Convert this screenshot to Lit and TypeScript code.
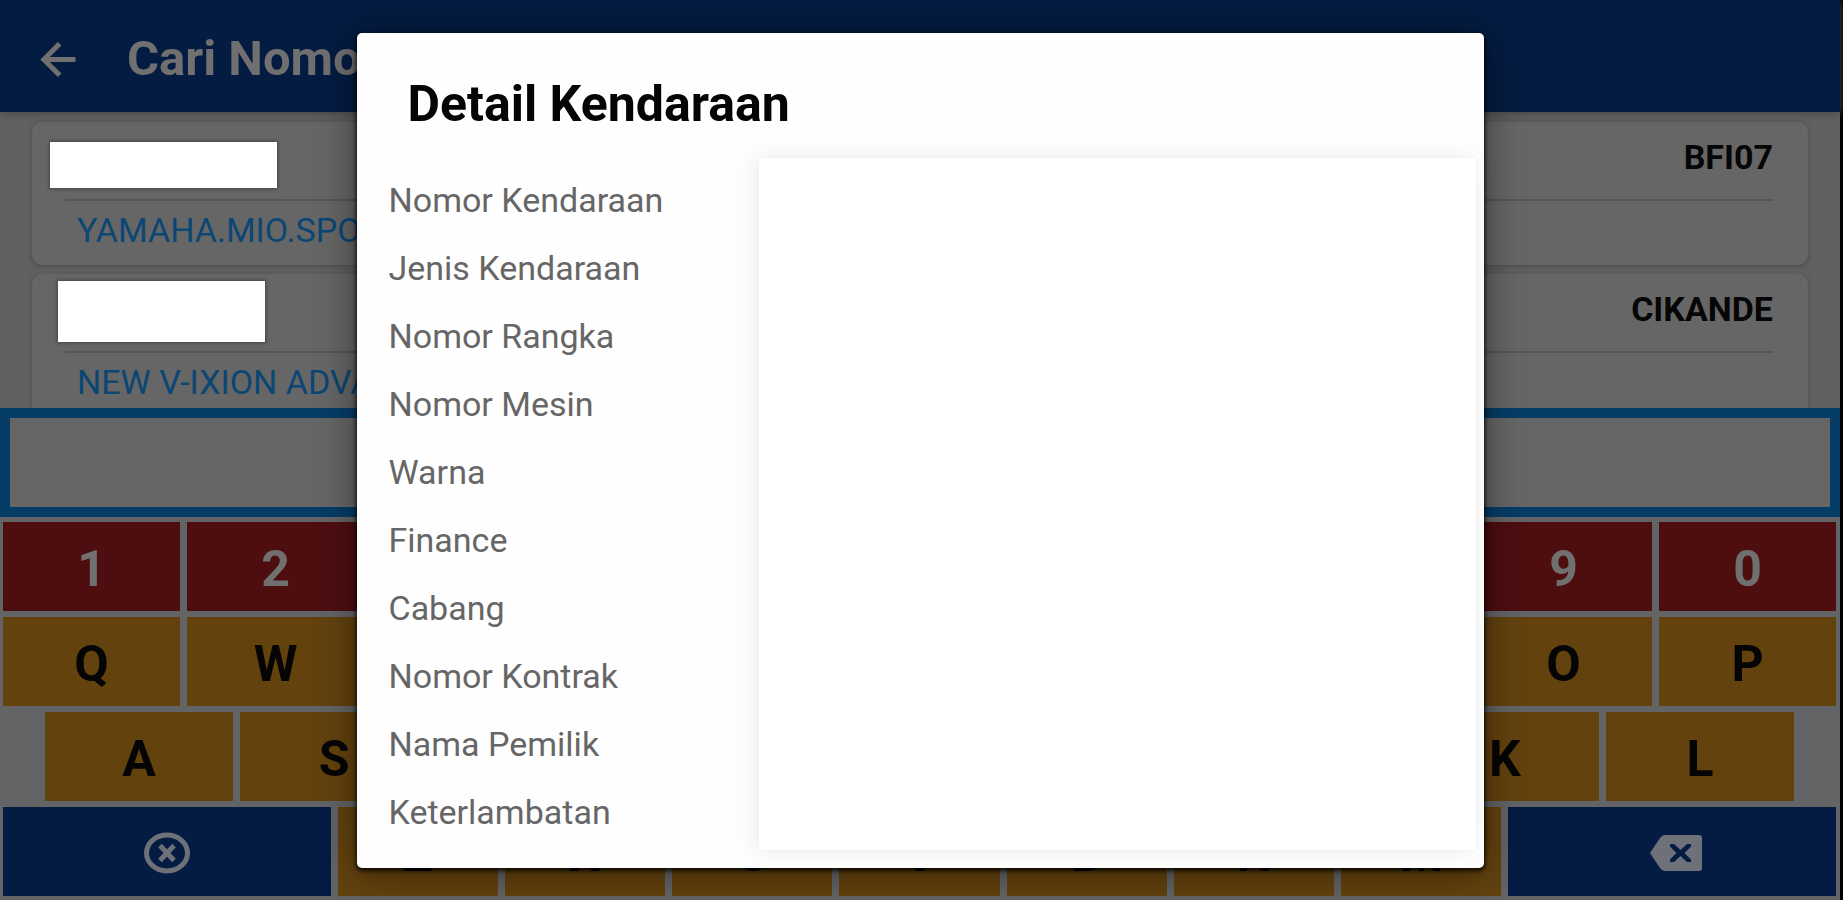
import { LitElement, html, css, svg } from "lit";
import { customElement, property } from "lit/decorators.js";

interface Vehicle {
  model: string;
  branch: string;
  mask: string;
}

const VEHICLES: Vehicle[] = [
  { model: "YAMAHA.MIO.SPORTY", branch: "BFI07", mask: "mask mask-wide" },
  { model: "NEW V-IXION ADVANCE", branch: "CIKANDE", mask: "mask mask-tall" },
];

const FIELDS = [
  "Nomor Kendaraan",
  "Jenis Kendaraan",
  "Nomor Rangka",
  "Nomor Mesin",
  "Warna",
  "Finance",
  "Cabang",
  "Nomor Kontrak",
  "Nama Pemilik",
  "Keterlambatan",
];

const clearIcon = svg`<svg viewBox="0 0 48 42" width="48" height="42" aria-hidden="true">
  <ellipse cx="24" cy="21" rx="20.500" ry="18" fill="none" stroke="currentColor" stroke-width="5"/>
  <path d="M17 13.500L31 28.500M31 13.500L17 28.500" stroke="currentColor" stroke-width="5"/>
</svg>`;

const backspaceIcon = svg`<svg viewBox="0 0 54 38" width="54" height="38" aria-hidden="true">
  <path fill="currentColor" fill-rule="evenodd" d="M16 1Q13 1 11 4L1 19L11 34Q13 37 16 37H50Q53 37 53 34V4Q53 1 50 1ZM25 10L31.500 16L38 10H42V12.500L35.500 19L42 25.500V28H38L31.500 22L25 28H21V25.500L27.500 19L21 12.500V10Z"/>
</svg>`;

@customElement("vehicle-card")
export class VehicleCard extends LitElement {
  @property({ attribute: false }) vehicle!: Vehicle;

  static styles = css`
    :host {
      display: block;
    }
    .card {
      position: relative;
      box-sizing: border-box;
      height: 143px;
      padding: 0 35px 0 33px;
      border-radius: 10px;
      background: #666;
      box-shadow: 0 1px 4px 1px #505050;
    }
    .top {
      display: flex;
      align-items: center;
      justify-content: flex-end;
      height: 70px;
      padding-bottom: 7px;
      border-bottom: 2px solid #565656;
      color: #060606;
      font-weight: 700;
      font-size: 34px;
    }
    .model {
      display: block;
      padding-left: 12px;
      color: #0b4674;
      font-size: 34px;
      line-height: 58px;
      text-decoration: none;
    }
    .mask {
      position: absolute;
      background: #fff;
      box-shadow: 0 0 3px 1px #444;
    }
    .mask-wide {
      left: 18px;
      top: 20px;
      width: 227px;
      height: 46px;
    }
    .mask-tall {
      left: 26px;
      top: 7px;
      width: 207px;
      height: 61px;
    }
  `;

  render() {
    return html`
      <article class="card">
        <div class="top">${this.vehicle.branch}</div>
        <a class="model" href="#">${this.vehicle.model}</a>
        <span class=${this.vehicle.mask}></span>
      </article>
    `;
  }
}

@customElement("plate-keyboard")
export class PlateKeyboard extends LitElement {
  static styles = css`
    :host {
      display: flex;
      flex-direction: column;
      gap: 6px;
      padding: 5px 4px 4px 3px;
      background: #636465;
    }
    .row {
      display: grid;
      grid-auto-flow: column;
      grid-auto-columns: minmax(0, 1fr);
      gap: 7px;
    }
    .inset {
      padding: 0 42px;
    }
    .key {
      display: flex;
      align-items: center;
      justify-content: center;
      box-sizing: border-box;
      height: 89px;
      margin: 0;
      padding: 4px 0 0;
      border: 0;
      background: #63420e;
      color: #050505;
      font: 700 50px Roboto, sans-serif;
    }
    .digit {
      background: #4e0e10;
      color: #707070;
    }
    .action {
      grid-column: span 2;
      padding: 2px 0 0;
      background: #041c43;
      color: #6f7178;
    }
    .erase {
      padding-left: 7px;
    }
  `;

  private keys(chars: string, cls = "key") {
    return [...chars].map((c) => html`<button type="button" class=${cls}>${c}</button>`);
  }

  render() {
    return html`
      <div class="row">${this.keys("1234567890", "key digit")}</div>
      <div class="row">${this.keys("QWERTYUIOP")}</div>
      <div class="row inset">${this.keys("ASDFGHJKL")}</div>
      <div class="row">
        <button type="button" class="key action" aria-label="Hapus semua">${clearIcon}</button>
        ${this.keys("ZXCVBNM")}
        <button type="button" class="key action erase" aria-label="Hapus">${backspaceIcon}</button>
      </div>
    `;
  }
}

@customElement("vehicle-detail")
export class VehicleDetail extends LitElement {
  static styles = css`
    :host {
      display: block;
      box-sizing: border-box;
      padding-bottom: 18px;
      border-radius: 5px;
      background: #fefefe;
      box-shadow: 0 2px 4px 1px rgba(0, 0, 0, 0.8), 0 4px 40px rgba(0, 0, 0, 0.45);
    }
    .title {
      margin: 0;
      padding: 38px 51px 21px;
      color: #050505;
      font-weight: 700;
      font-size: 50px;
      line-height: 66px;
    }
    .body {
      display: grid;
      grid-template-columns: 36% 1fr;
      padding-right: 8px;
    }
    .labels {
      margin: 0;
      padding: 8px 0 4px 32px;
      list-style: none;
      color: #666;
      font-size: 34px;
      line-height: 68px;
    }
    .values {
      background: #fff;
      box-shadow: -4px 0 24px rgba(0, 0, 0, 0.07), 0 0 6px rgba(0, 0, 0, 0.03);
    }
  `;

  render() {
    return html`
      <h2 class="title">Detail Kendaraan</h2>
      <div class="body">
        <ul class="labels">
          ${FIELDS.map((f) => html`<li>${f}</li>`)}
        </ul>
        <div class="values"></div>
      </div>
    `;
  }
}

@customElement("app-root")
export class AppRoot extends LitElement {
  static styles = css`
    :host {
      display: block;
      box-sizing: border-box;
      position: relative;
      height: 100vh;
      padding-right: 3px;
      overflow: hidden;
      background: #000;
      font-family: Roboto, sans-serif;
    }
    .screen {
      display: flex;
      flex-direction: column;
      height: 100%;
      background: #616161;
    }
    .bar {
      display: flex;
      align-items: center;
      gap: 42px;
      flex: none;
      box-sizing: border-box;
      height: 112px;
      padding: 6px 32px 0;
      background: #041c42;
      color: #707070;
      z-index: 1;
      box-shadow: 0 2px 8px #484a46;
    }
    .back {
      display: flex;
      padding: 0;
      border: 0;
      background: none;
      color: inherit;
    }
    .heading {
      margin: 0;
      font-weight: 700;
      font-size: 49px;
      line-height: 60px;
      white-space: nowrap;
    }
    .list {
      display: flex;
      flex-direction: column;
      gap: 9px;
      flex: 1;
      min-height: 0;
      box-sizing: border-box;
      padding: 10px 32px 0;
      overflow: hidden;
    }
    .plate {
      flex: none;
      display: block;
      box-sizing: border-box;
      width: 100%;
      height: 109px;
      margin: 0;
      padding: 0 24px;
      border: 10px solid #053d67;
      border-radius: 0;
      outline: none;
      background: #666;
      color: #050505;
      font: 700 50px Roboto, sans-serif;
    }
    .keyboard {
      flex: none;
    }
    .layer {
      position: absolute;
      inset: 0 3px 0 0;
      z-index: 2;
      display: flex;
      align-items: center;
      justify-content: center;
    }
    .detail {
      width: 61.25%;
    }
  `;

  render() {
    return html`
      <main class="screen">
        <header class="bar">
          <button type="button" class="back" aria-label="Kembali">
            <svg viewBox="0 0 24 24" width="53" height="53" aria-hidden="true">
              <path d="M19.700 12H5.500M12.500 4.900L5.400 12l7.100 7.100" fill="none" stroke="currentColor" stroke-width="2.300" />
            </svg>
          </button>
          <h1 class="heading">Cari Nomor</h1>
        </header>
        <section class="list">
          ${VEHICLES.map((v) => html`<vehicle-card .vehicle=${v}></vehicle-card>`)}
        </section>
        <input class="plate" type="text" aria-label="Nomor kendaraan" />
        <plate-keyboard class="keyboard"></plate-keyboard>
      </main>
      <div class="layer">
        <vehicle-detail class="detail" role="dialog" aria-label="Detail Kendaraan"></vehicle-detail>
      </div>
    `;
  }
}
